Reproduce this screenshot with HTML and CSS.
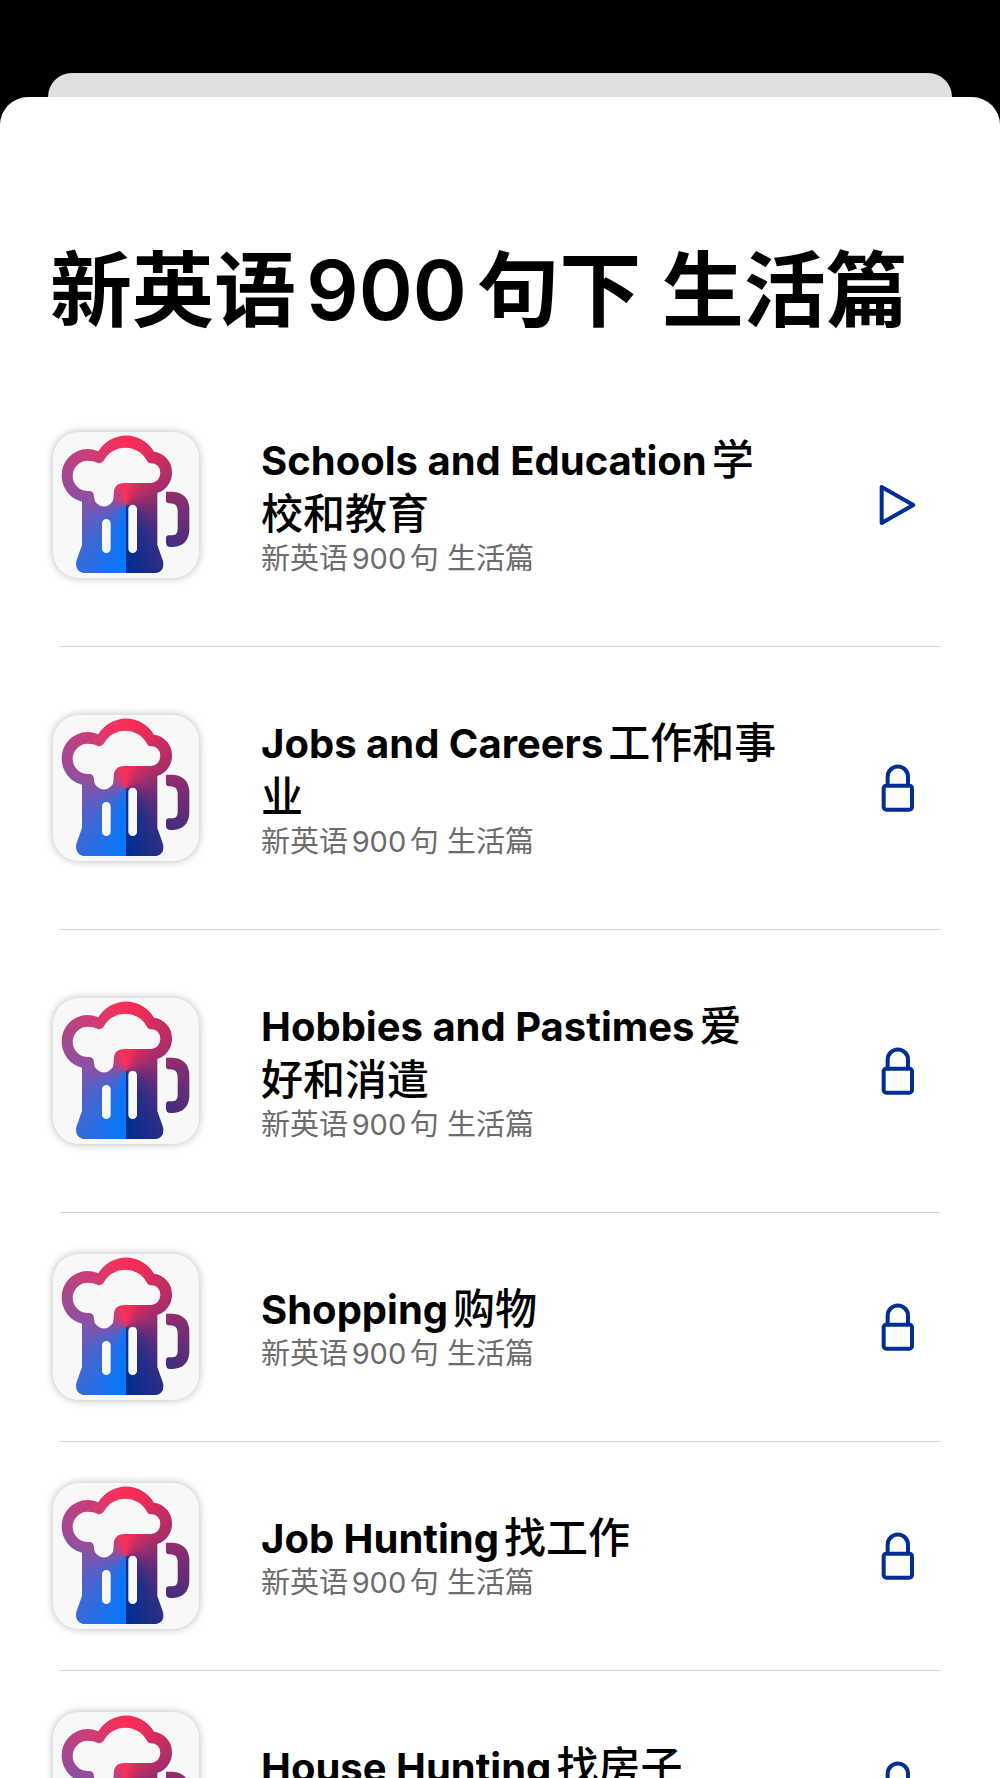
FILE: index.html
```html
<!DOCTYPE html>
<html lang="zh-CN">
<head>
<meta charset="utf-8">
<meta name="viewport" content="width=device-width, initial-scale=1">
<title>新英语900句下 生活篇</title>
<link rel="stylesheet" href="styles.css">
</head>
<body>
<svg class="defs" width="0" height="0" aria-hidden="true">
  <defs>
    <clipPath id="mug">
      <path clip-rule="evenodd" transform="scale(.33333) translate(-40 -39)" d="M127 248A80 80 0 0 1 66 170A78 78 0 0 1 143 90Q160 90 176 97A97 97 0 0 1 343 98A62 62 0 0 1 397 161A63 63 0 0 1 353 222V378L370 426Q376 456 350 462H130Q105 456 110 426L127 378ZM145 125A46 46 0 0 0 99 171A46 46 0 0 0 145 216Q163 214 163 233A29 29 0 0 0 222 233V225Q222 192 255 192H335Q360 188 362 162Q360 133 334 133Q325 133 321 124A73 73 0 0 0 193 124Q188 135 175 132Q162 125 145 125ZM187 313A13 13 0 0 1 213 313V389A13 13 0 0 1 187 389ZM266 270A13 13 0 0 1 292 270V389A13 13 0 0 1 266 389ZM379 218H400Q446 222 449 267V335Q446 380 400 384H390Q379 384 379 370V358Q379 349 387 349H397Q413 349 414 332V272Q411 253 392 253Q379 253 379 246Z"/>
    </clipPath>
    <symbol id="lock" viewBox="42 43 144 144">
      <rect x="71" y="108" width="85" height="72" rx="8"/>
      <path d="M83 108V81a30.500 30.500 0 0 1 61 0v27"/>
    </symbol>
    <symbol id="play" viewBox="42 65 144 144">
      <path d="M65 83V191L160 137Z"/>
    </symbol>
  </defs>
</svg>
<div class="screen">
  <div class="behind"></div>
  <main class="sheet">
    <h1 class="heading">新英语900句下 生活篇</h1>
    <ul class="lessons">
      <li class="lesson">
        <span class="cover"><span class="mug"></span></span>
        <div class="info"><h2 class="name"><b>Schools and Education</b>学校和教育</h2><p class="book">新英语900句 生活篇</p></div>
        <button class="action" type="button" aria-label="播放"><svg class="glyph"><use href="#play"/></svg></button>
      </li>
      <li class="lesson">
        <span class="cover"><span class="mug"></span></span>
        <div class="info"><h2 class="name"><b>Jobs and Careers</b>工作和事业</h2><p class="book">新英语900句 生活篇</p></div>
        <button class="action" type="button" aria-label="解锁"><svg class="glyph"><use href="#lock"/></svg></button>
      </li>
      <li class="lesson">
        <span class="cover"><span class="mug"></span></span>
        <div class="info"><h2 class="name"><b>Hobbies and Pastimes</b>爱好和消遣</h2><p class="book">新英语900句 生活篇</p></div>
        <button class="action" type="button" aria-label="解锁"><svg class="glyph"><use href="#lock"/></svg></button>
      </li>
      <li class="lesson">
        <span class="cover"><span class="mug"></span></span>
        <div class="info"><h2 class="name"><b>Shopping</b>购物</h2><p class="book">新英语900句 生活篇</p></div>
        <button class="action" type="button" aria-label="解锁"><svg class="glyph"><use href="#lock"/></svg></button>
      </li>
      <li class="lesson">
        <span class="cover"><span class="mug"></span></span>
        <div class="info"><h2 class="name"><b>Job Hunting</b>找工作</h2><p class="book">新英语900句 生活篇</p></div>
        <button class="action" type="button" aria-label="解锁"><svg class="glyph"><use href="#lock"/></svg></button>
      </li>
      <li class="lesson">
        <span class="cover"><span class="mug"></span></span>
        <div class="info"><h2 class="name"><b>House Hunting</b>找房子</h2><p class="book">新英语900句 生活篇</p></div>
        <button class="action" type="button" aria-label="解锁"><svg class="glyph"><use href="#lock"/></svg></button>
      </li>
    </ul>
  </main>
</div>
</body>
</html>
```
FILE: styles.css
```css
* {
  box-sizing: border-box;
}

body {
  margin: 0;
  background: #000;
  color: #000;
  font-family: Inter, "Noto Sans CJK SC", sans-serif;
  text-autospace: normal;
}

.defs {
  display: block;
}

.screen {
  display: flex;
  flex-direction: column;
  height: 100vh;
  padding-top: 73px;
  overflow: hidden;
}

.behind {
  flex: none;
  height: 24px;
  margin: 0 48px;
  border-radius: 24px 24px 0 0;
  background: #e0e0e0;
}

.sheet {
  flex: 1;
  min-height: 0;
  overflow-y: auto;
  scrollbar-width: none;
  padding-top: 144px;
  border-radius: 28px 28px 0 0;
  background: #fff;
}

.heading {
  margin: 0 50px 23px;
  font-size: 82px;
  font-weight: 600;
  line-height: 100px;
}

.lessons {
  margin: 0;
  padding: 0;
  list-style: none;
}

.lesson {
  display: flex;
  align-items: center;
  margin: 0 60px;
  padding: 41px 18px 41px 0;
  border-bottom: 1px solid #d2d2d2;
}

.cover {
  flex: none;
  width: 146px;
  height: 146px;
  margin-left: -7px;
  border-radius: 26px;
  background: #f8f8f8;
  box-shadow: 0 0 8px rgba(0, 0, 0, 0.28);
}

.mug {
  display: block;
  height: 100%;
  background: conic-gradient(from 180deg, #007aff, #ff2d55 180deg, #002d90 360deg);
  clip-path: url(#mug);
}

.info {
  flex: 1;
  padding: 28px 94px 28px 62px;
}

.name {
  margin: 0;
  font-size: 42px;
  font-weight: 500;
  line-height: 54px;
}

.name b {
  font-size: 40px;
  font-weight: 700;
  line-height: 40px;
}

.book {
  margin: 0;
  color: #6c6c6c;
  font-size: 29px;
  line-height: 36px;
}

.action {
  flex: none;
  width: 48px;
  height: 48px;
  padding: 0;
  border: 0;
  background: none;
  color: #002d96;
}

.glyph {
  display: block;
  width: 48px;
  height: 48px;
  fill: none;
  stroke: currentColor;
  stroke-width: 12px;
  stroke-linejoin: round;
}
```
